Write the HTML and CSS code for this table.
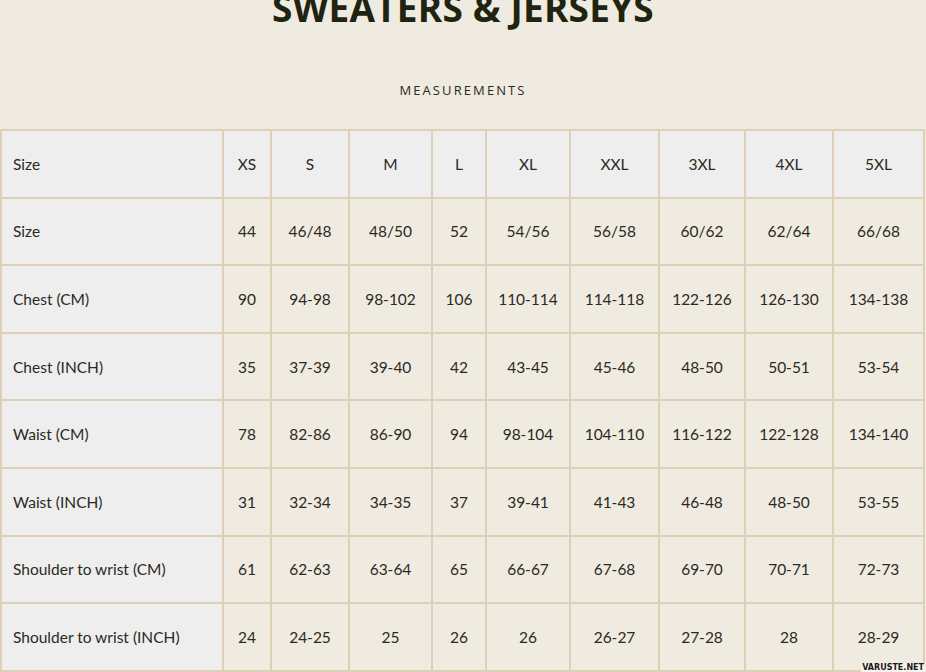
FILE: index.html
```html
<!DOCTYPE html>
<html lang="en">
<head>
<meta charset="utf-8">
<title>Sweaters &amp; Jerseys – Measurements</title>
<link rel="stylesheet" href="styles.css">
</head>
<body>
<div class="page">
  <h1 class="title">SWEATERS &amp; JERSEYS</h1>
  <h2 class="subtitle">MEASUREMENTS</h2>
  <table class="sizes">
    <colgroup>
      <col class="c-label"><col class="c1"><col class="c2"><col class="c3"><col class="c4"><col class="c5"><col class="c6"><col class="c7"><col class="c8"><col class="c9">
    </colgroup>
    <thead>
      <tr class="head"><td>Size</td><td>XS</td><td>S</td><td>M</td><td>L</td><td>XL</td><td>XXL</td><td>3XL</td><td>4XL</td><td>5XL</td></tr>
    </thead>
    <tbody>
      <tr><td>Size</td><td>44</td><td>46/48</td><td>48/50</td><td>52</td><td>54/56</td><td>56/58</td><td>60/62</td><td>62/64</td><td>66/68</td></tr>
      <tr><td>Chest (CM)</td><td>90</td><td>94-98</td><td>98-102</td><td>106</td><td>110-114</td><td>114-118</td><td>122-126</td><td>126-130</td><td>134-138</td></tr>
      <tr><td>Chest (INCH)</td><td>35</td><td>37-39</td><td>39-40</td><td>42</td><td>43-45</td><td>45-46</td><td>48-50</td><td>50-51</td><td>53-54</td></tr>
      <tr><td>Waist (CM)</td><td>78</td><td>82-86</td><td>86-90</td><td>94</td><td>98-104</td><td>104-110</td><td>116-122</td><td>122-128</td><td>134-140</td></tr>
      <tr><td>Waist (INCH)</td><td>31</td><td>32-34</td><td>34-35</td><td>37</td><td>39-41</td><td>41-43</td><td>46-48</td><td>48-50</td><td>53-55</td></tr>
      <tr><td>Shoulder to wrist (CM)</td><td>61</td><td>62-63</td><td>63-64</td><td>65</td><td>66-67</td><td>67-68</td><td>69-70</td><td>70-71</td><td>72-73</td></tr>
      <tr><td>Shoulder to wrist (INCH)</td><td>24</td><td>24-25</td><td>25</td><td>26</td><td>26</td><td>26-27</td><td>27-28</td><td>28</td><td>28-29</td></tr>
    </tbody>
  </table>
  <span class="watermark">VARUSTE.NET</span>
</div>
</body>
</html>
```

FILE: styles.css
```css
html, body {
  margin: 0;
  padding: 0;
  background: #f0ebe1;
}
body {
  font-family: Lato, "Open Sans", Arial, sans-serif;
  color: #2b2a22;
  overflow: hidden;
}
.page {
  position: relative;
  width: 926px;
  height: 672px;
  overflow: hidden;
}
.title {
  margin: -12px 0 0;
  text-align: center;
  font-family: "Open Sans", "DejaVu Sans", sans-serif;
  font-weight: 700;
  font-size: 37px;
  line-height: 40px;
  letter-spacing: 0.2px;
  color: #1f2410;
}
.subtitle {
  margin: 54px 0 0;
  text-align: center;
  font-family: "Open Sans", sans-serif;
  font-weight: 400;
  font-size: 13px;
  line-height: 16px;
  letter-spacing: 2.1px;
  color: #2a2a22;
}
.sizes {
  margin-top: 31px;
  width: 925px;
  table-layout: fixed;
  border-collapse: collapse;
  font-size: 15.5px;
}
.sizes td {
  border: 2px solid #ddd0b6;
  height: 65.6px;
  padding: 0;
  text-align: center;
  vertical-align: middle;
  background: #f0ebe1;
}
.sizes td:first-child {
  text-align: left;
  padding-left: 11px;
  background: #eeeeee;
}
.sizes .head td {
  background: #eeeeee;
}
.c-label { width: 222px; }
.c1 { width: 48px; }
.c2 { width: 78px; }
.c3 { width: 83px; }
.c4 { width: 54px; }
.c5 { width: 84px; }
.c6 { width: 89px; }
.c7 { width: 86px; }
.c8 { width: 88px; }
.c9 { width: 91px; }
.watermark {
  position: absolute;
  right: 1px;
  bottom: 0;
  padding: 0 1px;
  font-family: "DejaVu Sans", sans-serif;
  font-weight: 700;
  font-size: 8px;
  line-height: 9px;
  color: #1a1a1a;
  background: #f6f3ec;
}
```
